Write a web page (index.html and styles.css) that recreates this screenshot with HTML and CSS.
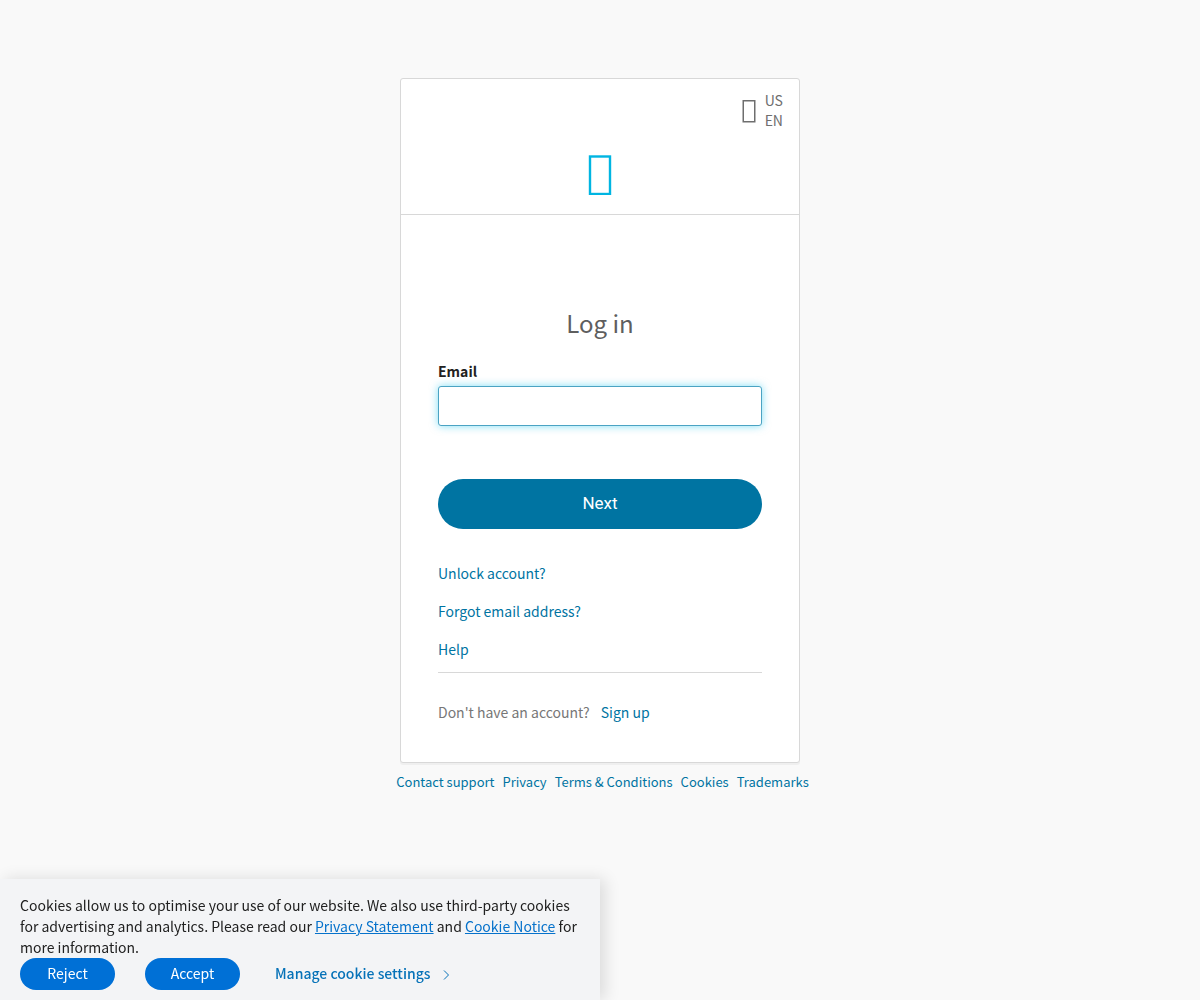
FILE: index.html
```html
<!DOCTYPE html>
<html lang="en">
<head>
  <meta charset="UTF-8" />
  <meta name="viewport" content="width=device-width, initial-scale=1.0"/>
  <title>Log in</title>
  <link rel="stylesheet" href="styles.css">
</head>
<body>

  <main class="login">
    <div class="card">
      <header class="card-header">
        <button class="locale" type="button">
          <svg class="locale-icon" viewBox="0 0 14 24" aria-hidden="true">
            <rect x="1.25" y="1.75" width="11.5" height="21" />
          </svg>
          <span class="locale-text">US<br>EN</span>
        </button>
        <svg class="logo" viewBox="0 0 24 40" aria-hidden="true">
          <rect x="2" y="1.5" width="20" height="37.5" />
        </svg>
      </header>

      <div class="card-body">
        <form class="login-form">
          <h1>Log in</h1>
          <label for="email">Email</label>
          <input type="email" id="email" name="email" autocomplete="username">
          <button class="next-btn" type="button">Next</button>
        </form>

        <ul class="help-links">
          <li><a href="#">Unlock account?</a></li>
          <li><a href="#">Forgot email address?</a></li>
          <li><a href="#">Help</a></li>
        </ul>

        <p class="signup">Don't have an account? <a href="#">Sign up</a></p>
      </div>
    </div>

    <footer class="footer-links">
      <a href="#">Contact support</a>
      <a href="#">Privacy</a>
      <a href="#">Terms &amp; Conditions</a>
      <a href="#">Cookies</a>
      <a href="#">Trademarks</a>
    </footer>
  </main>

  <section class="cookie-banner">
    <p>Cookies allow us to optimise your use of our website. We also use third-party cookies for advertising and analytics. Please read our <a href="#">Privacy Statement</a> and <a href="#">Cookie Notice</a> for more information.</p>
    <div class="cookie-actions">
      <button class="cookie-btn" type="button">Reject</button>
      <button class="cookie-btn" type="button">Accept</button>
      <a class="cookie-settings" href="#">Manage cookie settings
        <svg class="chevron" viewBox="0 0 8 14" aria-hidden="true"><path d="M2 4.5 L6.5 9 L2 13.5" /></svg>
      </a>
    </div>
  </section>

</body>
</html>
```
FILE: styles.css
```css
* {
  box-sizing: border-box;
}

body {
  margin: 0;
  background: #f9f9f9;
  color: #212121;
  font-family: "Noto Sans CJK SC", "Open Sans", sans-serif;
  font-size: 14px;
  line-height: 20px;
}

a {
  color: #0074a2;
  text-decoration: none;
}

a:hover {
  text-decoration: underline;
}

.login {
  display: flex;
  flex-direction: column;
  align-items: center;
  padding-top: 78px;
}

.card {
  width: 100%;
  max-width: 400px;
  background: #fff;
  border: 1px solid #d8d8d8;
  border-radius: 3px;
  box-shadow: 0 2px 0 rgba(175, 175, 175, 0.12);
}

.card-header {
  display: flex;
  flex-direction: column;
  align-items: center;
  padding: 11px 16px 19px;
  border-bottom: 1px solid #d8d8d8;
}

.locale {
  display: flex;
  align-self: flex-end;
  align-items: flex-end;
  gap: 9px;
  margin-bottom: 25px;
  padding: 0;
  border: 0;
  background: none;
  color: #6e6e6e;
  font: inherit;
  text-align: left;
  cursor: pointer;
}

.locale-icon {
  width: 14px;
  height: 24px;
  margin-bottom: 7px;
  fill: none;
  stroke: #6e6e6e;
  stroke-width: 1.5;
}

.logo {
  width: 24px;
  height: 40px;
  fill: none;
  stroke: #00b5e2;
  stroke-width: 2.4;
}

.card-body {
  padding: 89px 37px 40px;
}

.login-form {
  display: flex;
  flex-direction: column;
}

h1 {
  margin: 0 0 19px;
  color: #5e5e5e;
  font-size: 24px;
  font-weight: 400;
  line-height: 38px;
  text-align: center;
}

label {
  margin-bottom: 5px;
  font-weight: 700;
}

#email {
  width: 100%;
  height: 40px;
  padding: 0 10px;
  border: 1px solid #4ba3c3;
  border-radius: 3px;
  outline: none;
  box-shadow: 0 0 8px rgba(0, 190, 235, 0.5);
  font: inherit;
}

.next-btn {
  height: 50px;
  margin-top: 53px;
  padding: 0 0 2px;
  border: 0;
  border-radius: 25px;
  background: #0074a2;
  color: #fff;
  font-family: Roboto, sans-serif;
  font-size: 17px;
  cursor: pointer;
}

.help-links {
  display: flex;
  flex-direction: column;
  gap: 18px;
  margin: 0;
  padding: 34px 0 13px;
  border-bottom: 1px solid #d8d8d8;
  list-style: none;
}

.signup {
  margin: 29px 0 0;
  color: #777;
}

.signup a {
  margin-left: 8px;
}

.footer-links {
  display: flex;
  flex-wrap: wrap;
  justify-content: center;
  gap: 8px;
  padding: 9px 0 0 5px;
  font-size: 13px;
}

.cookie-banner {
  position: fixed;
  bottom: 0;
  left: 0;
  width: 50%;
  padding: 16px 20px 10px;
  background: #f3f4f6;
  box-shadow: 5px 0 15px rgba(0, 0, 0, 0.12);
}

.cookie-banner p {
  margin: 0;
  line-height: 21px;
}

.cookie-banner p a {
  color: #0672cb;
  text-decoration: underline;
}

.cookie-actions {
  display: flex;
  align-items: center;
  gap: 30px;
}

.cookie-btn {
  width: 95px;
  height: 32px;
  padding: 0 0 2px;
  border: 0;
  border-radius: 16px;
  background: #0070d6;
  color: #fff;
  font: inherit;
  cursor: pointer;
}

.cookie-settings {
  display: flex;
  align-items: center;
  gap: 12px;
  padding: 0 0 2px 5px;
  color: #0672b8;
  font-weight: 500;
}

.chevron {
  width: 8px;
  height: 14px;
  fill: none;
  stroke: currentColor;
}
```
